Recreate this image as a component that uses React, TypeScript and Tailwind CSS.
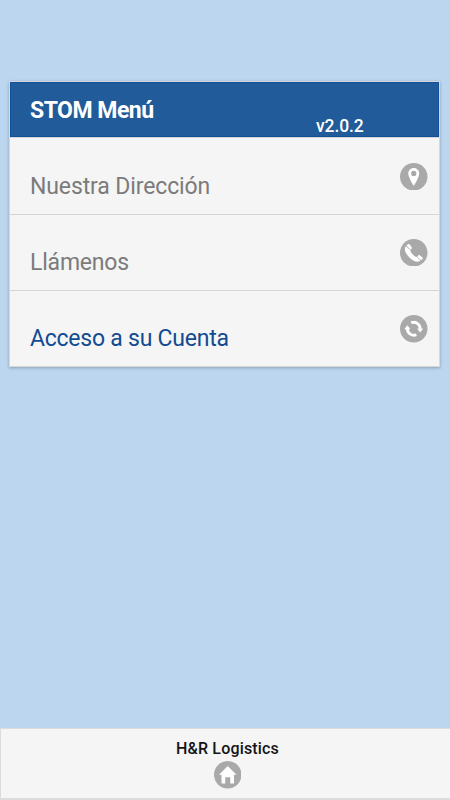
import type { ReactNode } from "react";

function RoundIcon({ children }: { children: ReactNode }) {
  return (
    <svg viewBox="-4 -4 22 22" className="h-[27.5px] w-[27.5px] shrink-0" fill="white">
      <circle cx="7" cy="7" r="11" fill="#a9a9a9" />
      {children}
    </svg>
  );
}

const items = [
  {
    label: "Nuestra Dirección",
    color: "text-[#7b7b7b] tracking-[-0.12px]",
    icon: (
      <path d="M7-.1C4.3-.1 2.6 2 2.6 4.4C2.6 7.4 7 14.4 7 14.4S11.4 7.4 11.4 4.4C11.4 2 9.7-.1 7-.1zM7 6.4A2.1 2.1 0 1 1 7 2.2A2.1 2.1 0 0 1 7 6.4z" />
    ),
  },
  {
    label: "Llámenos",
    color: "text-[#7b7b7b] tracking-[-0.2px]",
    icon: (
      <g>
        <path d="M.7 1.7C-.8 3.3-.2 6 2 9C4.4 12.2 7.8 14.7 11.2 14L12.3 13.2L9.4 10.2C8.6 10.5 7.8 10 6.5 8.6C5 7 4 5.8 4.4 4.9z" />
        <path d="M1.2 1.2L2.4.2C2.8-.2 3.3-.2 3.6.2L5.4 2.6C5.7 3 5.6 3.4 5.3 3.7L4.5 4.5z" />
        <path d="M9.8 9.9L10.6 9.1C10.9 8.8 11.4 8.7 11.8 9L13.9 10.7C14.3 11 14.3 11.6 14 12L12.8 13z" />
      </g>
    ),
  },
  {
    label: "Acceso a su Cuenta",
    color: "text-[#114b91] tracking-[-0.24px]",
    icon: (
      <g>
        <g fill="none" stroke="white" strokeWidth="2.3">
          <path d="M4.9 2.2A5.2 5.2 0 0 1 12.1 7" />
          <path d="M9.1 11.8A5.2 5.2 0 0 1 1.9 7" />
        </g>
        <path d="M9.7 6.7H14.6L12.1 9.9zM4.3 7.3H-.6L1.9 4.1z" />
      </g>
    ),
  },
];

export default function App() {
  return (
    <div className="flex h-screen flex-col justify-between overflow-hidden bg-[#bcd6ef] font-['Roboto',sans-serif]">
      <main className="mt-[81px] mr-[10px] ml-[9px] border border-[#d6d8da] bg-[#f5f5f5] shadow-[0_1px_3px_rgba(0,0,0,0.25)]">
        <header className="flex h-[55.4px] items-start border border-[#0f519b] bg-[#215b99] pl-[19px] text-white">
          <h1 className="mt-[12px] w-[286px] text-[23px] leading-8 font-bold tracking-[-0.5px]">
            STOM Menú
          </h1>
          <span className="mt-[31px] text-[17.5px] leading-6 font-medium tracking-[-0.1px]">v2.0.2</span>
        </header>
        <ul>
          {items.map((item) => (
            <li
              key={item.label}
              className="flex h-[76.3px] items-start justify-between border-t border-[#d5d5d5] pr-[11.5px] pl-5"
            >
              <span className={`mt-[32.4px] text-[23px] leading-8 ${item.color}`}>{item.label}</span>
              <span className="mt-[24.3px]">
                <RoundIcon>{item.icon}</RoundIcon>
              </span>
            </li>
          ))}
        </ul>
      </main>

      <footer className="flex h-[72px] flex-col items-center border-t border-b-2 border-l border-[#dcdcdc] bg-[#f5f5f5] pl-[4px]">
        <p className="mt-[10px] text-[16px] leading-5 font-medium tracking-[0.16px] text-[#141414]">H&R Logistics</p>
        <div className="mt-[2px]">
          <RoundIcon>
            <path d="M7 0L0 7H2V14H5V9H9V14H12V7H14z" />
          </RoundIcon>
        </div>
      </footer>
    </div>
  );
}
